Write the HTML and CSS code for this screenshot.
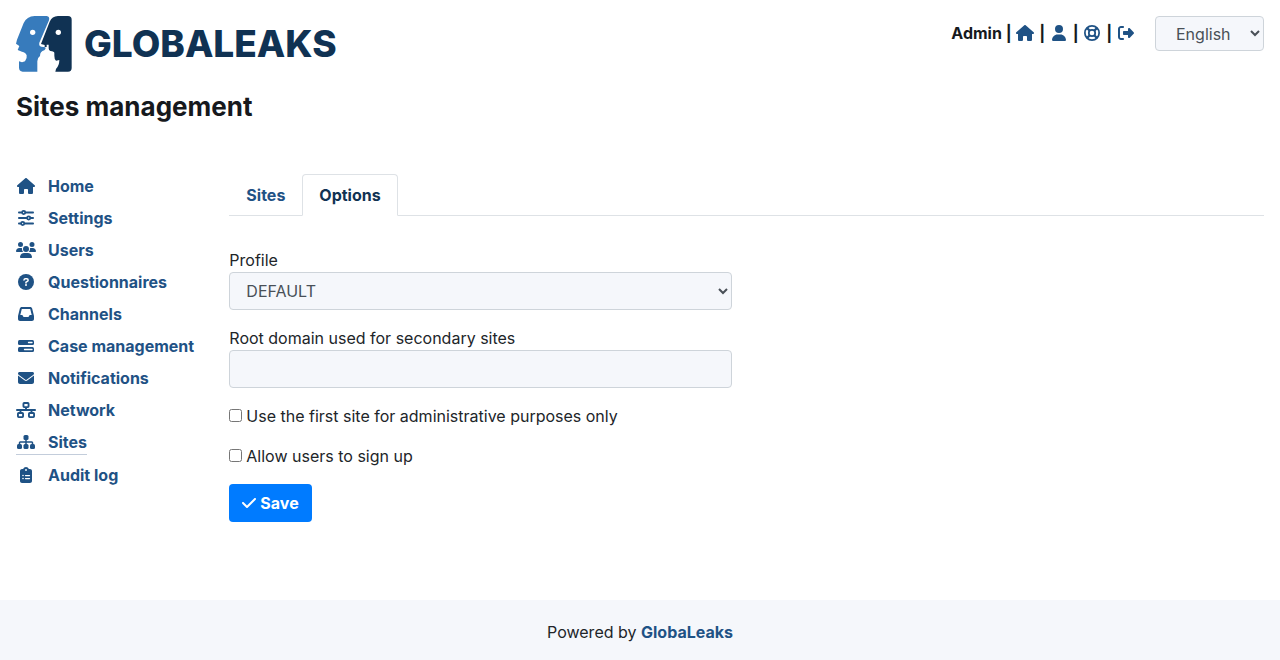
FILE: index.html
```html
<!DOCTYPE html>
<html lang="en">
<head>
<meta charset="utf-8">
<meta name="viewport" content="width=device-width, initial-scale=1">
<title>GlobaLeaks - Sites management</title>
<link rel="stylesheet" href="styles.css">
</head>
<body>
<svg class="sprite" aria-hidden="true">
  <symbol id="home" viewBox="-32 0 640 512"><path d="M575.8 255.5c0 18-15 32.1-32 32.1h-32l.7 160.2c0 2.7-.2 5.4-.5 8.1V472c0 22.1-17.9 40-40 40H392c-22.1 0-40-17.9-40-40V384c0-17.7-14.3-32-32-32H256c-17.7 0-32 14.3-32 32v88c0 22.1-17.9 40-40 40H104c-22.1 0-40-17.9-40-40V287.6H32c-18 0-32-14-32-32.1c0-9 3-17 10-24L266.4 8c7-7 15-8 22-8s15 2 21 7L564.8 231.5c8 7 12 15 11 24z"/></symbol>
  <symbol id="user" viewBox="-96 0 640 512"><path d="M224 256A128 128 0 1 0 224 0a128 128 0 1 0 0 256zm-45.7 48C79.8 304 0 383.8 0 482.3C0 498.7 13.3 512 29.7 512H418.3c16.4 0 29.7-13.3 29.7-29.7C448 383.8 368.2 304 269.7 304H178.3z"/></symbol>
  <symbol id="ring" viewBox="-64 0 640 512"><g fill="none" stroke="currentColor" stroke-width="56"><circle cx="256" cy="256" r="228"/><circle cx="256" cy="256" r="102"/><path d="M93 93l91 91M419 93l-91 91M93 419l91-91M419 419l-91-91" stroke-width="72"/></g></symbol>
  <symbol id="logout" viewBox="-64 0 640 512"><path d="M377.9 105.9L500.7 228.7c7.2 7.2 11.3 17.1 11.3 27.3s-4.1 20.1-11.3 27.3L377.9 406.1c-6.4 6.4-15 9.9-24 9.9c-18.7 0-33.9-15.2-33.9-33.9V320H192c-17.7 0-32-14.3-32-32v-64c0-17.7 14.3-32 32-32h128v-62.1c0-18.7 15.2-33.9 33.9-33.9c9 0 17.6 3.6 24 9.9zM160 96H96c-17.7 0-32 14.3-32 32v256c0 17.7 14.3 32 32 32h64c17.7 0 32 14.3 32 32s-14.3 32-32 32H96c-53 0-96-43-96-96V128C0 75 43 32 96 32h64c17.7 0 32 14.3 32 32s-14.3 32-32 32z"/></symbol>
  <symbol id="sliders" viewBox="-64 0 640 512"><g fill="none" stroke="currentColor" stroke-width="58" stroke-linecap="round"><path d="M29 80h90M245 80h238M29 256h250M405 256h78M29 432h58M213 432h270"/><circle cx="182" cy="80" r="50"/><circle cx="342" cy="256" r="50"/><circle cx="150" cy="432" r="50"/></g></symbol>
  <symbol id="users" viewBox="0 0 640 512"><path d="M144 0a80 80 0 1 1 0 160A80 80 0 1 1 144 0zM512 0a80 80 0 1 1 0 160A80 80 0 1 1 512 0zM0 298.7C0 239.8 47.8 192 106.7 192h42.7c15.9 0 31 3.5 44.6 9.7c-1.3 7.2-1.9 14.7-1.9 22.3c0 38.2 16.8 72.5 43.3 96H21.3C9.6 320 0 310.4 0 298.7zM405.3 320h-.7c26.6-23.5 43.3-57.8 43.3-96c0-7.6-.7-15-1.9-22.3c13.6-6.3 28.7-9.7 44.6-9.7h42.7C592.2 192 640 239.8 640 298.7c0 11.8-9.6 21.3-21.3 21.3H405.3zM224 224a96 96 0 1 1 192 0 96 96 0 1 1-192 0zM128 485.3C128 411.7 187.7 352 261.3 352h117.4C452.3 352 512 411.7 512 485.3c0 14.7-11.9 26.7-26.7 26.7H154.7c-14.7 0-26.7-11.9-26.7-26.7z"/></symbol>
  <symbol id="question" viewBox="-64 0 640 512"><circle cx="256" cy="256" r="256"/><path d="M192 192q5-40 42-40h48q42 0 42 44 0 24-24 38l-44 26v28" fill="none" stroke="#fff" stroke-width="48" stroke-linecap="round" stroke-linejoin="round"/><circle cx="256" cy="352" r="32" fill="#fff"/></symbol>
  <symbol id="inbox" viewBox="-64 0 640 512"><path d="M121 32C91.6 32 66 52 58.9 80.5L1.9 308.4C.6 313.5 0 318.7 0 323.9V416c0 35.3 28.7 64 64 64H448c35.3 0 64-28.7 64-64V323.9c0-5.2-.6-10.4-1.9-15.5l-57-227.9C446 52 420.4 32 391 32H121zm0 64H391l48 192H387.8c-12.1 0-23.2 6.8-28.6 17.7l-14.3 28.6c-5.4 10.8-16.5 17.7-28.6 17.7H195.8c-12.1 0-23.2-6.8-28.6-17.7l-14.3-28.6c-5.4-10.8-16.5-17.7-28.6-17.7H73L121 96z"/></symbol>
  <symbol id="bars" viewBox="-64 0 640 512"><rect y="64" width="512" height="160" rx="48"/><rect y="288" width="512" height="160" rx="48"/><path d="M336 144h112M208 368h240" stroke="#fff" stroke-width="42" stroke-linecap="round"/></symbol>
  <symbol id="mail" viewBox="-64 0 640 512"><path d="M48 64C21.5 64 0 85.5 0 112c0 15.1 7.1 29.3 19.2 38.4L236.8 313.6c11.4 8.5 27 8.5 38.4 0L492.8 150.4c12.1-9.1 19.2-23.3 19.2-38.4c0-26.5-21.5-48-48-48H48zM0 176V384c0 35.3 28.7 64 64 64H448c35.3 0 64-28.7 64-64V176L294.4 339.2c-22.8 17.1-54 17.1-76.8 0L0 176z"/></symbol>
  <symbol id="network" viewBox="0 0 640 512"><g fill="none" stroke="currentColor" stroke-width="60"><rect x="238" y="30" width="164" height="132" rx="24"/><rect x="62" y="350" width="164" height="132" rx="24"/><rect x="414" y="350" width="164" height="132" rx="24"/><path d="M30 256h580" stroke-linecap="round"/><path d="M320 162v94M144 256v94M496 256v94"/></g></symbol>
  <symbol id="sitemap" viewBox="-32 0 640 512"><rect x="208" y="32" width="160" height="160" rx="48"/><rect y="320" width="160" height="160" rx="48"/><rect x="208" y="320" width="160" height="160" rx="48"/><rect x="416" y="320" width="160" height="160" rx="48"/><path d="M288 180v150M80 330v-50q0-24 24-24h368q24 0 24 24v50" fill="none" stroke="currentColor" stroke-width="48"/></symbol>
  <symbol id="clipboard" viewBox="-128 0 640 512"><path d="M192 0c-41.8 0-77.4 26.7-90.5 64H64C28.7 64 0 92.7 0 128v320c0 35.3 28.7 64 64 64h256c35.3 0 64-28.7 64-64V128c0-35.3-28.7-64-64-64h-37.5C269.4 26.7 233.8 0 192 0z"/><g fill="#fff"><circle cx="192" cy="96" r="30"/><circle cx="96" cy="272" r="26"/><circle cx="96" cy="368" r="26"/></g><path d="M176 272h128M176 368h128" stroke="#fff" stroke-width="40" stroke-linecap="round"/></symbol>
</svg>

<header class="header">
  <a class="logo" href="#" aria-label="GlobaLeaks">
    <svg class="logo-mark" viewBox="24 24 168 168" aria-hidden="true">
      <path fill="#377bbc" d="M80 24H116Q126 25 123 37L94 104Q92 114 100 116L112 118Q115 122 109 127Q96 130 96 144Q88 149 88 160V191H44Q33 191 33 178V160Q42 165 51 160Q58 152 56 142Q53 133 42 131L29 126L34 114L24 107L27 95L47 45Q56 25 80 24Z"/>
      <path fill="#103253" d="M150 24H180Q191 24 191 35V180Q191 191 180 191H142L144 183Q154 172 154 156L144 158Q139 154 139 143V135Q139 130 127 129Q122 128 122 121V110H116V117H110V111L99 108L125 41Q132 25 150 24Z"/>
      <circle cx="74" cy="73" r="8" fill="#fff"/><circle cx="151" cy="73" r="8" fill="#fff"/>
    </svg>
    <span class="logo-text">GLOBALEAKS</span>
  </a>
  <div class="account">
    <nav class="links" aria-label="Account">
      Admin |
      <a href="#" aria-label="Home"><svg class="icon"><use href="#home"/></svg></a> |
      <a href="#" aria-label="Preferences"><svg class="icon"><use href="#user"/></svg></a> |
      <a href="#" aria-label="Help"><svg class="icon"><use href="#ring"/></svg></a> |
      <a href="#" aria-label="Log out"><svg class="icon"><use href="#logout"/></svg></a>
    </nav>
    <select class="control language" aria-label="Language"><option>English</option></select>
  </div>
</header>

<h1 class="title">Sites management</h1>

<div class="layout">
  <nav class="sidebar" aria-label="Administration">
    <a href="#"><svg class="icon"><use href="#home"/></svg>Home</a>
    <a href="#"><svg class="icon"><use href="#sliders"/></svg>Settings</a>
    <a href="#"><svg class="icon"><use href="#users"/></svg>Users</a>
    <a href="#"><svg class="icon"><use href="#question"/></svg>Questionnaires</a>
    <a href="#"><svg class="icon"><use href="#inbox"/></svg>Channels</a>
    <a href="#"><svg class="icon"><use href="#bars"/></svg>Case management</a>
    <a href="#"><svg class="icon"><use href="#mail"/></svg>Notifications</a>
    <a href="#"><svg class="icon"><use href="#network"/></svg>Network</a>
    <a class="current" href="#" aria-current="page"><svg class="icon"><use href="#sitemap"/></svg>Sites</a>
    <a href="#"><svg class="icon"><use href="#clipboard"/></svg>Audit log</a>
  </nav>
  <main class="content">
    <nav class="tabs" aria-label="Sites sections">
      <a class="tab" href="#">Sites</a>
      <a class="tab active" href="#" aria-current="true">Options</a>
    </nav>
    <form class="form">
      <div class="fields">
        <div class="field">
          <label for="profile">Profile</label>
          <select class="control profile" id="profile"><option>DEFAULT</option></select>
        </div>
        <div class="field">
          <label for="domain">Root domain used for secondary sites</label>
          <input class="control" id="domain" type="text">
        </div>
        <div class="check"><input type="checkbox" id="first"><label for="first">Use the first site for administrative purposes only</label></div>
        <div class="check"><input type="checkbox" id="signup"><label for="signup">Allow users to sign up</label></div>
      </div>
      <button class="save" type="button"><svg class="check-icon" viewBox="0 0 448 512" aria-hidden="true"><path d="M438.6 105.4c12.5 12.5 12.5 32.8 0 45.3l-256 256c-12.5 12.5-32.8 12.5-45.3 0l-128-128c-12.5-12.5-12.5-32.8 0-45.3s32.8-12.5 45.3 0L160 338.7 393.4 105.4c12.5-12.5 32.8-12.5 45.3 0z"/></svg>Save</button>
    </form>
  </main>
</div>

<footer class="footer">Powered by&nbsp;<a href="#">GlobaLeaks</a></footer>
</body>
</html>
```
FILE: styles.css
```css
* {
  box-sizing: border-box;
}

body {
  margin: 0;
  min-height: 100vh;
  display: flex;
  flex-direction: column;
  background: #fff;
  color: #212529;
  font: 16px/24px Inter, "Liberation Sans", sans-serif;
}

a {
  color: #1f5285;
  font-weight: 700;
  text-decoration: none;
}

.sprite {
  position: absolute;
  width: 0;
  height: 0;
}

.icon {
  flex: none;
  width: 20px;
  height: 16px;
  vertical-align: -2px;
  fill: currentColor;
}

.header {
  display: flex;
  justify-content: space-between;
  align-items: flex-start;
  padding: 16px 16px 0;
}

.logo {
  display: flex;
  align-items: center;
  gap: 12px;
}

.logo-mark {
  display: block;
  width: 56px;
  height: 56px;
}

.logo-text {
  color: #103253;
  font-size: 37px;
  line-height: 56px;
  font-weight: 800;
}

.account {
  display: flex;
  align-items: flex-start;
  gap: 19px;
}

.links {
  padding-top: 5px;
  color: #16191d;
  font-weight: 700;
}

.control {
  width: 100%;
  height: 38px;
  padding: 0 12px;
  border: 1px solid #ced4da;
  border-radius: 4px;
  background: #f5f7fb;
  color: #495057;
  font: inherit;
}

.language {
  width: 109px;
  height: 35px;
  padding: 0 0 0 16px;
}

.profile {
  padding-right: 0;
}

.title {
  margin: 19px 16px 0;
  color: #16191d;
  font-size: 26px;
  line-height: 32px;
  font-weight: 700;
}

.layout {
  flex: 1;
  display: grid;
  grid-template-columns: 1fr 5fr;
  align-items: start;
  padding: 51px 0 78px;
}

.sidebar {
  display: flex;
  flex-direction: column;
  align-items: flex-start;
  gap: 8px;
  padding-left: 16px;
  white-space: nowrap;
}

.sidebar a {
  display: flex;
  align-items: center;
  gap: 12px;
}

.sidebar .current {
  border-bottom: 1px solid #c3cddb;
}

.content {
  padding: 0 16px;
}

.tabs {
  display: flex;
  border-bottom: 1px solid #dee2e6;
}

.tab {
  margin-bottom: -1px;
  padding: 8px 16px;
  border: 1px solid transparent;
  border-radius: 4px 4px 0 0;
}

.tab.active {
  border-color: #dee2e6 #dee2e6 #fff;
  background: #fff;
  color: #103253;
}

.form {
  padding-top: 32px;
}

.fields {
  display: grid;
  gap: 16px;
  width: calc(50% - 15px);
}

.field {
  display: flex;
  flex-direction: column;
}

.check {
  display: flex;
  align-items: center;
  gap: 4px;
}

.check input {
  margin: 0 0 2px;
}

.save {
  display: flex;
  align-items: center;
  gap: 4px;
  height: 38px;
  margin-top: 16px;
  padding: 0 13px;
  border: 0;
  border-radius: 4px;
  background: #007bff;
  color: #fff;
  font: inherit;
  font-weight: 700;
}

.check-icon {
  width: 14px;
  height: 16px;
  fill: currentColor;
}

.footer {
  display: flex;
  align-items: center;
  justify-content: center;
  min-height: 60px;
  padding-top: 4px;
  background: #f5f7fb;
}
```
